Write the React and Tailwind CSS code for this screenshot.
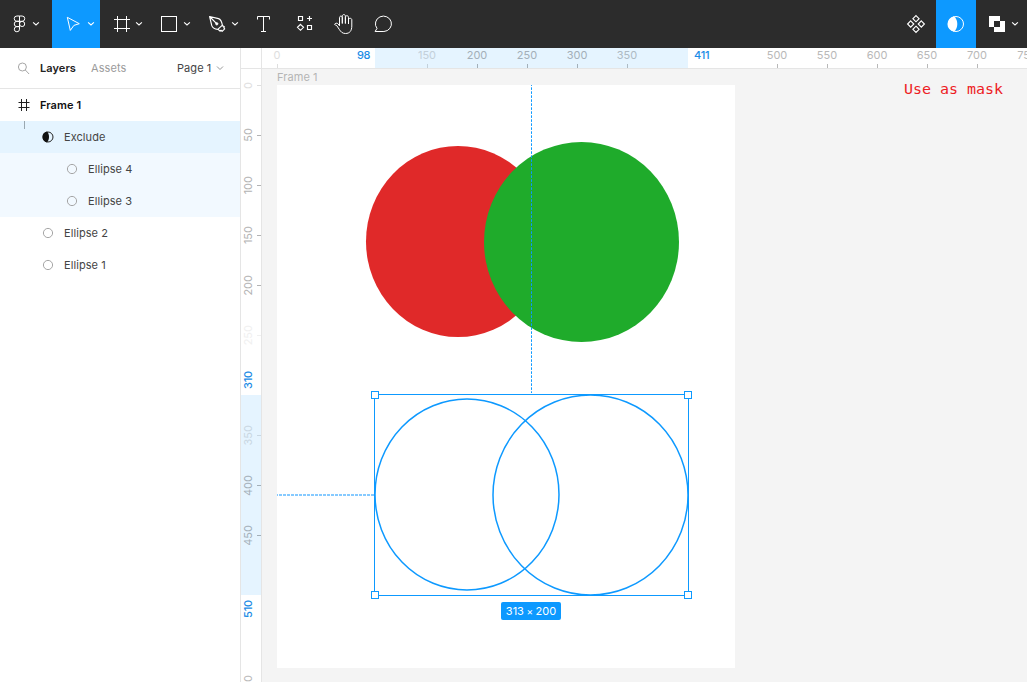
import React from "react";

function Icon({ box, w, children }) {
  return (
    <svg width={w} height="48" viewBox={box} fill="none" stroke="#fff" strokeWidth="1" className="block shrink-0">
      {children}
    </svg>
  );
}

const chevron = (x) => <path d={`M${x} 22.3l2.9 2.7 2.9-2.7`} strokeWidth="1.1" />;

function Toolbar() {
  return (
    <header className="flex h-12 shrink-0 justify-between bg-[#2c2c2c]">
      <div className="flex">
        <Icon w={52} box="0 0 52 48">
          <path d="M19.5 16h-2.6a2.6 2.6 0 0 0 0 5.3h2.6zM19.5 16h2.6a2.6 2.6 0 0 1 0 5.3h-2.6zM19.5 21.3h-2.6a2.6 2.6 0 0 0 0 5.3h2.6zM19.5 26.6h-2.6a2.6 2.6 0 1 0 2.6 2.6z" />
          <circle cx="22.1" cy="23.95" r="2.6" />
          {chevron(33.1)}
        </Icon>
        <div className="bg-[#0d99ff]">
          <Icon w={48} box="52 0 48 48">
            <path d="M67.3 17.3l12 6.4-5.4 1.7-3.6 5z" strokeLinejoin="round" />
            {chevron(88.1)}
          </Icon>
        </div>
        <Icon w={48} box="100 0 48 48">
          <path d="M117.5 16v16M126.5 16v16M114 19.5h16M114 28.5h16" />
          {chevron(136.1)}
        </Icon>
        <Icon w={48} box="148 0 48 48">
          <rect x="161.5" y="16.5" width="15" height="15" />
          {chevron(184.1)}
        </Icon>
        <Icon w={48} box="196 0 48 48">
          <path d="M209.6 16.5l8.9 2.1c2.3.8 3.4 3.8 3.9 6.6l-4.6 4.2c-2.8-.2-5.4-1.7-6.1-4zM209.6 16.5l6.5 6.6M217.8 29.1l2.2 2.1 1-.9 1.1 1 2.6-2.5-1-1.1.8-.8-2.5-1.7" strokeLinejoin="round" strokeWidth="1.15" />
          <circle cx="216.8" cy="23.8" r="1.1" fill="#fff" />
          {chevron(232.1)}
        </Icon>
        <Icon w={40} box="244 0 40 48">
          <path d="M257.5 19.5v-3h12v3M263.5 16.5v15M261 31.5h5" />
        </Icon>
        <Icon w={40} box="284 0 40 48">
          <path d="M298.5 16.5h4v4h-4zM307.5 25.5h4v4h-4zM309.5 16v5M307 18.5h5M300.5 24.3l3 3-3 3-3-3z" strokeWidth="1.15" />
        </Icon>
        <Icon w={40} box="324 0 40 48">
          <path d="M339.5 25.8v-8.1c0-2.1 2.8-2.1 2.8 0v5.8M342.3 23.5v-7.3c0-2.2 3.1-2.2 3.1 0v7.3M345.4 23.5v-6.2c0-2.1 3.1-2.1 3.1 0v6.6M348.5 23.9v-4.1c0-2 3.3-2 3.3 0v6.2c0 4.8-2.1 7.5-6.3 7.5-3.3 0-4.7-1.8-6.3-4.2l-2.4-3.6c-1-.6-1.7-.8-2.2-1.2.4-1.5 2.6-1.8 3.6-.5l1.3 1.8" strokeLinejoin="round" />
        </Icon>
        <Icon w={40} box="364 0 40 48">
          <path d="M375.1 31.5l1.9-3.1a8 7.7 0 1 1 6.9 3.1z" strokeLinejoin="round" />
        </Icon>
      </div>
      <div className="flex">
        <Icon w={40} box="896 0 40 48">
          <path d="M916 15.6l3.1 3.1-3.1 3.1-3.1-3.1zM916 26.2l3.1 3.1-3.1 3.1-3.1-3.1zM910.7 20.9l3.1 3.1-3.1 3.1-3.1-3.1zM921.3 20.9l3.1 3.1-3.1 3.1-3.1-3.1z" strokeWidth="1.15" />
        </Icon>
        <div className="bg-[#0d99ff]">
          <Icon w={40} box="936 0 40 48">
            <circle cx="956" cy="24" r="7.5" />
            <path d="M954 16.3a7.8 7.8 0 0 0 0 15.4c4.4-3.5 4.4-11.9 0-15.4z" fill="#fff" stroke="none" />
          </Icon>
        </div>
        <Icon w={51} box="976 0 51 48">
          <path d="M989 16h11v5h5v11h-11v-5h-5zM994 21v6h6v-6z" fill="#fff" fillRule="evenodd" stroke="none" />
          {chevron(1012.1)}
        </Icon>
      </div>
    </header>
  );
}

function EllipseIcon() {
  return (
    <svg width="12" height="12" viewBox="0 0 12 12" fill="none" stroke="#a6a6a6">
      <circle cx="6" cy="6" r="4.6" />
    </svg>
  );
}

function Layer({ name, className }) {
  return (
    <div className={`flex h-8 items-center gap-[10px] text-[#444] ${className}`}>
      <EllipseIcon />
      <span>{name}</span>
    </div>
  );
}

function LayersPanel() {
  return (
    <aside className="w-[241px] shrink-0 border-r border-[#e5e5e5] bg-white text-[11px] tracking-[0.07px]">
      <div className="flex h-[41px] items-center border-b border-[#e5e5e5] pl-[17px]">
        <svg width="13" height="13" viewBox="0 0 13 13" fill="none" stroke="#a6a6a6">
          <circle cx="5.4" cy="5" r="4" />
          <path d="M8.3 8l3.8 4" />
        </svg>
        <span className="ml-[10px] w-[51px] font-semibold text-[#222]">Layers</span>
        <span className="w-[86px] text-[#9b9b9b]">Assets</span>
        <span className="text-[#444]">Page 1</span>
        <svg width="8" height="6" viewBox="0 0 8 6" fill="none" stroke="#999" className="ml-[5px]">
          <path d="M1 1.5l3 3 3-3" />
        </svg>
      </div>
      <div className="flex h-8 items-center gap-[10px] pl-[18px] font-semibold text-[#111]">
        <svg width="12" height="12" viewBox="0 0 12 12" stroke="#222">
          <path d="M3.5 0v12M8.5 0v12M.5 3.5h11M.5 8.5h11" />
        </svg>
        <span>Frame 1</span>
      </div>
      <div className="flex h-8 items-center bg-[#e5f4ff] pl-6 text-[#444]">
        <i className="h-2 w-px self-start bg-[#9aa7b0]" />
        <svg width="12" height="12" viewBox="0 0 12 12" className="ml-[17px]">
          <circle cx="6" cy="6" r="5" fill="none" stroke="#222" />
          <path d="M5 .6a5.5 5.5 0 0 0 0 10.8c2.7-2.6 2.7-8.2 0-10.8z" fill="#111" />
        </svg>
        <span className="ml-[10px]">Exclude</span>
      </div>
      <Layer name="Ellipse 4" className="bg-[#f2f9ff] pl-[66px]" />
      <Layer name="Ellipse 3" className="bg-[#f2f9ff] pl-[66px]" />
      <Layer name="Ellipse 2" className="pl-[42px]" />
      <Layer name="Ellipse 1" className="pl-[42px]" />
    </aside>
  );
}

const xMarks = [
  ["0", "text-[#dedede]"],
  ["", ""],
  ["", ""],
  ["150", "text-[#c3d0da]"],
  ["200", "text-[#a3afb8]"],
  ["250", "text-[#a3afb8]"],
  ["300", "text-[#a3afb8]"],
  ["350", "text-[#adbac3]"],
  ["", ""],
  ["", ""],
  ["500", "text-[#b8b8b8]"],
  ["550", "text-[#b8b8b8]"],
  ["600", "text-[#b8b8b8]"],
  ["650", "text-[#b8b8b8]"],
  ["700", "text-[#b8b8b8]"],
  ["750", "text-[#b8b8b8]"],
];

const yMarks = [
  ["0", "text-[#dedede]"],
  ["50", "text-[#b3b3b3]"],
  ["100", "text-[#b3b3b3]"],
  ["150", "text-[#b3b3b3]"],
  ["200", "text-[#b3b3b3]"],
  ["250", "text-[#f0f0f0]"],
  ["", ""],
  ["350", "text-[#c9d7e2]"],
  ["400", "text-[#a3afb8]"],
  ["450", "text-[#a3afb8]"],
  ["", ""],
  ["", ""],
  ["600", "text-[#b8b8b8]"],
];

function TopRuler() {
  return (
    <div className="relative flex h-[21px] overflow-hidden border-b border-[#e5e5e5] bg-white">
      <div className="absolute left-[134px] top-0 h-5 w-[313px] bg-[#e5f4ff]" />
      <div className="w-[21px] shrink-0 border-r border-[#e5e5e5]" />
      <div className="relative ml-[-10px] flex">
        {xMarks.map(([label, color], i) => (
          <div key={i} className={`flex w-[50px] shrink-0 flex-col items-center justify-between ${color}`}>
            <span className="h-4 leading-[15px]">{label}</span>
            {label && <i className="ml-px h-1 w-px bg-current" />}
          </div>
        ))}
      </div>
      <span className="absolute left-[116px] top-0 font-medium leading-[15px] tracking-[-0.5px] text-[#1b8ce6]">98</span>
      <span className="absolute left-[453px] top-0 font-medium leading-[15px] tracking-[-0.2px] text-[#1b8ce6]">411</span>
    </div>
  );
}

function SideRuler() {
  return (
    <div className="relative w-[21px] shrink-0 overflow-hidden border-r border-[#e5e5e5] bg-white">
      <div className="absolute left-0 top-[326px] h-[200px] w-5 bg-[#e5f4ff]" />
      <div className="relative mt-[-9px] flex flex-col">
        {yMarks.map(([label, color], i) => (
          <div key={i} className={`flex h-[50px] shrink-0 items-center justify-between ${color}`}>
            <span className="w-[15px] rotate-180 text-center leading-[15px] [writing-mode:vertical-rl]">{label}</span>
            {label && <i className="mt-px h-px w-1 bg-current" />}
          </div>
        ))}
      </div>
      <span className="absolute left-0 top-[302px] w-[15px] rotate-180 font-medium leading-[15px] tracking-[-0.2px] text-[#1b8ce6] [writing-mode:vertical-rl]">310</span>
      <span className="absolute left-0 top-[531px] w-[15px] rotate-180 font-medium leading-[15px] tracking-[-0.2px] text-[#1b8ce6] [writing-mode:vertical-rl]">510</span>
    </div>
  );
}

function Canvas() {
  return (
    <main className="relative flex-1 overflow-hidden bg-[#f4f4f4]">
      <span className="absolute left-[15px] top-0 leading-4 tracking-[0.07px] text-[#b5b5b5]">Frame 1</span>
      <svg className="absolute left-[15px] top-4 bg-white" width="458" height="583" viewBox="277 85 458 583" fill="none">
        <ellipse cx="458" cy="241.5" rx="92" ry="95.5" fill="#e02929" />
        <ellipse cx="581.5" cy="242" rx="97.5" ry="100" fill="#1fab2b" />
        <path d="M531.5 85v308" stroke="#0d99ff" strokeDasharray="2.6 1.4" strokeDashoffset="1.7" />
        <path d="M277 495h98" stroke="#86caff" strokeWidth="2" strokeDasharray="3 1" strokeDashoffset="2" />
        <g stroke="#0d99ff">
          <ellipse cx="467" cy="494.5" rx="92" ry="95.5" strokeWidth="1.5" />
          <ellipse cx="590.5" cy="495" rx="97.5" ry="100" strokeWidth="1.5" />
          <rect x="374.5" y="394.5" width="314" height="201" />
          <g fill="#fff">
            <rect x="371.5" y="391.5" width="7" height="7" />
            <rect x="684.5" y="391.5" width="7" height="7" />
            <rect x="371.5" y="591.5" width="7" height="7" />
            <rect x="684.5" y="591.5" width="7" height="7" />
          </g>
        </g>
      </svg>
      <div className="absolute left-[239px] top-[533px] flex h-[18px] w-[60px] items-center justify-center gap-[2.5px] rounded-[2px] bg-[#0d99ff] text-white">
        <span>313</span>
        <span className="text-[10px]">×</span>
        <span>200</span>
      </div>
      <span className="absolute left-[642px] top-[13px] origin-center scale-y-[0.88] whitespace-pre font-['DejaVu_Sans_Mono',monospace] text-[15px] leading-[17px] tracking-[-0.04px] text-[#ed1c24]">Use as mask</span>
    </main>
  );
}

export default function App() {
  return (
    <div className="flex h-[682px] w-[1027px] flex-col overflow-hidden font-['Inter',sans-serif] text-[11px]">
      <Toolbar />
      <div className="flex min-h-0 flex-1">
        <LayersPanel />
        <div className="flex min-w-0 flex-1 flex-col">
          <TopRuler />
          <div className="flex min-h-0 flex-1">
            <SideRuler />
            <Canvas />
          </div>
        </div>
      </div>
    </div>
  );
}
